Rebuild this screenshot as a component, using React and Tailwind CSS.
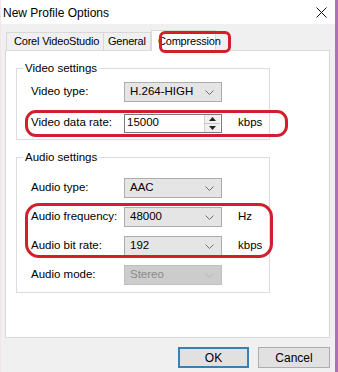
import React from 'react';

const font = { fontFamily: '"Liberation Sans", Arial, sans-serif' };

const Chevron = ({ disabled }) => (
  <svg width="9" height="5" viewBox="0 0 9 5" className="shrink-0">
    <path d="M0.5 0.5 L4.5 4.5 L8.5 0.5" fill="none" stroke={disabled ? '#b4b4b4' : '#707070'} strokeWidth="1" />
  </svg>
);

const Select = ({ value, disabled }) => (
  <div
    className={`w-[98px] h-[20px] flex items-center justify-between pl-[5px] pr-[7px] border ${
      disabled ? 'bg-[#cccccc] border-[#bfbfbf] text-[#8a8a8a]' : 'bg-[#e5e5e5] border-[#acacac] text-black'
    }`}
  >
    <span>{value}</span>
    <Chevron disabled={disabled} />
  </div>
);

const Spin = ({ value }) => (
  <div className="w-[98px] h-[19px] flex items-center justify-between bg-white border border-[#7a7a7a] pl-[2px]">
    <span>{value}</span>
    <div className="flex flex-col h-full w-[16px] border-l border-[#d0d0d0] mr-[1px]">
      <div className="flex-1 flex items-center justify-center bg-[#f0f0f0] border-b border-[#c8c8c8]">
        <svg width="7" height="4" viewBox="0 0 7 4"><path d="M0 4 L3.5 0 L7 4 Z" fill="#222" /></svg>
      </div>
      <div className="flex-1 flex items-center justify-center bg-[#f0f0f0]">
        <svg width="7" height="4" viewBox="0 0 7 4"><path d="M0 0 L3.5 4 L7 0 Z" fill="#222" /></svg>
      </div>
    </div>
  </div>
);

const Row = ({ label, children, unit }) => (
  <div className="flex items-center h-[20px]">
    <span className="w-[93px] pl-[14px] shrink-0 box-content">{label}</span>
    {children}
    {unit && <span className="ml-[16px]">{unit}</span>}
  </div>
);

const Group = ({ title, className, children }) => (
  <fieldset className={`border border-[#dcdcdc] mx-[10px] w-[254px] ${className}`}>
    <legend className="ml-[6px] px-[2px] leading-[14px]">{title}</legend>
    {children}
  </fieldset>
);

export default function App() {
  return (
    <div
      className="relative w-[338px] h-[372px] bg-[#f0f0f0] text-[11.5px] text-black border-r-[3px] border-r-[#b070b8] border-l border-l-[#f3e4ee] overflow-hidden"
      style={font}
    >
      <div className="h-[24px] bg-white flex items-center justify-between pl-[2px] pr-[8px]">
        <span className="text-[12px] pt-[1px]">New Profile Options</span>
        <svg width="11" height="11" viewBox="0 0 11 11" className="mt-[1px]">
          <path d="M0.5 0.5 L10.5 10.5 M10.5 0.5 L0.5 10.5" stroke="#111" strokeWidth="1" />
        </svg>
      </div>

      <div className="px-[4px] pt-[6px]">
        <div className="flex items-end h-[20px] pl-[1px] text-[11px] tracking-[-0.2px]">
          <div className="h-[18px] w-[98px] pl-[7px] flex items-center whitespace-nowrap border border-b-0 border-[#d9d9d9] bg-[#f0f0f0]">
            Corel VideoStudio
          </div>
          <div className="h-[18px] w-[47px] pl-[4px] flex items-center whitespace-nowrap border border-b-0 border-l-0 border-[#d9d9d9] bg-[#f0f0f0]">
            General
          </div>
          <div className="h-[21px] w-[65px] pl-[6px] flex items-center whitespace-nowrap border border-b-0 border-[#d9d9d9] bg-white -mb-[1px] relative z-10">
            Compression
          </div>
        </div>
        <div className="h-[288px] w-[325px] bg-white border border-[#d9d9d9] pt-[10px]">
          <Group title="Video settings" className="pt-[7px] pb-[6px]">
            <div className="flex flex-col gap-[11px]">
              <Row label="Video type:">
                <Select value="H.264-HIGH" />
              </Row>
              <Row label="Video data rate:" unit="kbps">
                <Spin value="15000" />
              </Row>
            </div>
          </Group>
          <Group title="Audio settings" className="mt-[10px] pt-[14px] pb-[7px]">
            <div className="flex flex-col gap-[9px]">
              <Row label="Audio type:">
                <Select value="AAC" />
              </Row>
              <Row label="Audio frequency:" unit="Hz">
                <Select value="48000" />
              </Row>
              <Row label="Audio bit rate:" unit="kbps">
                <Select value="192" />
              </Row>
              <Row label="Audio mode:">
                <Select value="Stereo" disabled />
              </Row>
            </div>
          </Group>
        </div>
        <div className="flex justify-end gap-[9px] pt-[9px] pr-[1px]">
          <button className="w-[71px] h-[21px] bg-[#e1e1e1] border-2 border-[#3c7fb1] text-[12px]">OK</button>
          <button className="w-[72px] h-[21px] bg-[#e1e1e1] border border-[#adadad] text-[12px]">Cancel</button>
        </div>
      </div>

      {/* red marker annotations drawn over the dialog */}
      <div className="absolute left-[158px] top-[31px] w-[72px] h-[22px] border-[3px] border-[#d11f2c] rounded-[6px] z-20" />
      <div className="absolute left-[24px] top-[110px] w-[263px] h-[27px] border-[3px] border-[#d11f2c] rounded-[11px] z-20" />
      <div className="absolute left-[24px] top-[203px] w-[248px] h-[55px] border-[3px] border-[#d11f2c] rounded-[14px] z-20" />
    </div>
  );
}
